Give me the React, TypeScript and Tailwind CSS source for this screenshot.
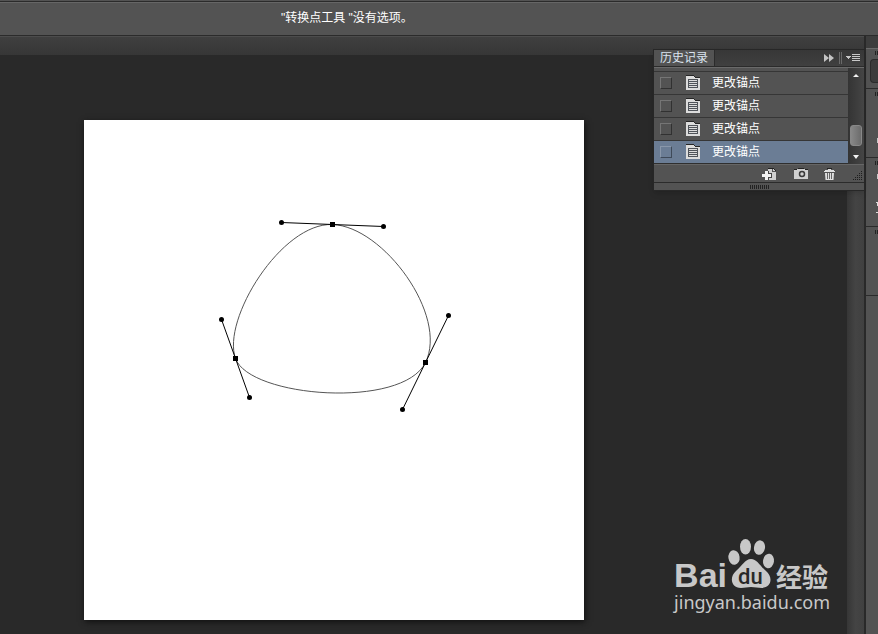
import { useState } from 'react'

const historyStates = [
  { id: 1, name: '更改锚点' },
  { id: 2, name: '更改锚点' },
  { id: 3, name: '更改锚点' },
  { id: 4, name: '更改锚点' },
]

// Anchor points of the path, each with its two direction handles
const anchors = [
  { x: 248, y: 104, a: [197, 102], b: [299, 106] },
  { x: 341, y: 242, a: [364, 195], b: [318, 289] },
  { x: 151, y: 238, a: [165, 277], b: [137, 199] },
]

function StateIcon() {
  return (
    <svg width="14" height="16" viewBox="0 0 14 16" shapeRendering="crispEdges" aria-hidden="true">
      <path d="M0 0h8v1h1v1h5v1H0z" fill="#262626" />
      <path d="M0 1h8v1h1v1h5v12H0z" fill="#dcdcdc" />
      <path d="M2 4h10v9H2z" fill="#50545a" />
      <path d="M3 5h8v1H3zM3 7h8v1H3zM3 9h8v1H3zM3 11h8v1H3z" fill="#dcdcdc" />
    </svg>
  )
}

function NewDocumentIcon() {
  return (
    <svg width="15" height="12" viewBox="0 0 15 12" shapeRendering="crispEdges" aria-hidden="true">
      <path d="M6 0h6v1H6zM12 1h1v1h-1zM13 2h1v1h-1z" fill="#222" />
      <path d="M6 1h4v3h4v8H6z" fill="#d0d0d0" />
      <path d="M11 1h1v1h1v1h-2z" fill="#d0d0d0" />
      <path d="M3 3h4v2h3v5H7v2H3z" fill="#444" />
      <path d="M3 3h3v3h3v3H6v3H3V9H0V6h3z" fill="#f2f2f2" />
    </svg>
  )
}

function CameraIcon() {
  return (
    <svg width="14" height="11" viewBox="0 0 14 11" aria-hidden="true">
      <path d="M0 1h4V0h6v1h4v10H0z" fill="#d0d0d0" />
      <path d="M4 0h6v1H4zM0 1h3v1H0zM11 1h3v1h-3z" fill="#222" />
      <circle cx="8" cy="6" r="2.500" fill="#d0d0d0" stroke="#3a3a3a" strokeWidth="1.500" />
    </svg>
  )
}

function TrashIcon() {
  return (
    <svg width="11" height="12" viewBox="0 0 11 12" aria-hidden="true">
      <path d="M3 0h5v1H3z" fill="#222" />
      <path d="M4 1h3v1h3v1h1v1H0V3h1V2h3z" fill="#e0e0e0" />
      <path d="M1 5h9l-.5 7h-8z" fill="#e0e0e0" />
      <path d="M3 5h1v6H3zM5 5h1v6H5zM7 5h1v6H7z" fill="#666" />
    </svg>
  )
}

function ResizeGrip() {
  return (
    <svg width="10" height="10" viewBox="0 0 10 10" shapeRendering="crispEdges" aria-hidden="true">
      <path
        d="M8 0h1v1H8zM6 2h1v1H6zM8 2h1v1H8zM4 4h1v1H4zM6 4h1v1H6zM8 4h1v1H8zM2 6h1v1H2zM4 6h1v1H4zM6 6h1v1H6zM8 6h1v1H8zM0 8h1v1H0zM2 8h1v1H2zM4 8h1v1H4zM6 8h1v1H6zM8 8h1v1H8z"
        fill="#1e1e1e"
      />
    </svg>
  )
}

function HistoryPanel() {
  const [current, setCurrent] = useState(4)
  const [source, setSource] = useState(0)

  return (
    <section
      aria-label="历史记录"
      className="absolute top-[49px] right-[13px] w-[212px] border border-[#272727] bg-[#535353] shadow-md"
    >
      {/* Tab bar */}
      <div className="flex h-[17px] items-stretch border-b border-[#2b2b2b] bg-linear-to-b from-[#373737] to-[#404040]">
        <button className="w-[61px] border-r border-[#2b2b2b] bg-[#535353] text-center text-[12px] leading-[16px] text-[#dbe4ef]">
          历史记录
        </button>
        <div className="flex flex-1 items-center justify-end gap-1 pr-1">
          <button aria-label="折叠" className="mr-px">
            <svg width="10" height="8" viewBox="0 0 10 8">
              <path d="M0 0l5 4-5 4zM5 0l5 4-5 4z" fill="#c4c4c4" />
            </svg>
          </button>
          <span className="h-3 w-[3px] border-x border-[#6a6a6a]" />
          <button aria-label="面板菜单">
            <svg width="14" height="8" viewBox="0 0 14 8" shapeRendering="crispEdges">
              <path d="M0 2h5v1H4v1H3v1H2V4H1V3H0zM6 0h8v1H6zM6 2h8v1H6zM6 4h8v1H6zM6 6h8v1H6z" fill="#c8c8c8" />
            </svg>
          </button>
        </div>
      </div>

      {/* State list */}
      <div className="flex border-t border-[#6a6a6a]">
        <ul className="flex-1 border-b border-[#2f2f2f] pt-[3px]">
          {historyStates.map((state) => (
            <li
              key={state.id}
              className={`flex h-[23px] items-center border-t border-[#363636] pl-[6px] ${
                state.id === current ? 'bg-[#6b7d95]' : 'bg-[#535353]'
              }`}
            >
              <input
                type="checkbox"
                aria-label={`历史记录画笔的源 ${state.id}`}
                checked={source === state.id}
                onChange={() => setSource(source === state.id ? 0 : state.id)}
                className="size-3 appearance-none border border-t-white/20 border-r-black/40 border-b-black/40 border-l-white/20 checked:bg-white/30"
              />
              <button
                onClick={() => setCurrent(state.id)}
                className="flex flex-1 items-center gap-3 pl-[14px] text-[12px] leading-[22px] text-white"
              >
                <StateIcon />
                {state.name}
              </button>
            </li>
          ))}
        </ul>
        <div className="flex w-4 flex-col items-center bg-linear-to-r from-[#343434] to-[#454545] pt-[6px] pb-[5px]">
          <svg width="6" height="4" viewBox="0 0 6 4">
            <path d="M3 0l3 3H0z" fill="#f2f2f2" />
          </svg>
          <div className="mt-auto mb-[9px] h-[21px] w-3 rounded-[3px] border border-[#888] bg-linear-to-r from-[#888] to-[#6c6c6c]" />
          <svg width="6" height="4" viewBox="0 0 6 4">
            <path d="M0 0h6L3 4z" fill="#f2f2f2" />
          </svg>
        </div>
      </div>

      {/* Actions */}
      <div className="flex h-[18px] items-center justify-end border-t border-[#666]">
        <button aria-label="从当前状态创建新文档" className="mr-[17px]">
          <NewDocumentIcon />
        </button>
        <button aria-label="创建新快照" className="mr-4">
          <CameraIcon />
        </button>
        <button aria-label="删除当前状态" className="mr-[18px]">
          <TrashIcon />
        </button>
        <span className="mt-[5px] mr-px">
          <ResizeGrip />
        </span>
      </div>
      <div className="flex h-2 items-center justify-center border-t border-[#2b2b2b]">
        <svg width="19" height="4" viewBox="0 0 19 4" shapeRendering="crispEdges" aria-hidden="true">
          <path d="M0 2h19" stroke="#222" strokeWidth="4" strokeDasharray="1 1" />
        </svg>
      </div>
    </section>
  )
}

function PathDrawing() {
  return (
    <svg width="500" height="500" viewBox="-0.5 -0.5 500 500" aria-label="路径">
      <path
        d="M151 238C137 199 197 102 248 104C299 106 364 195 341 242C318 289 165 277 151 238Z"
        fill="none"
        stroke="#555"
        strokeWidth="1"
      />
      {anchors.map((p) => (
        <g key={p.x}>
          <path d={`M${p.a[0]} ${p.a[1]}L${p.x} ${p.y}L${p.b[0]} ${p.b[1]}`} fill="none" stroke="#000" />
          <circle cx={p.a[0]} cy={p.a[1]} r="2.5" />
          <circle cx={p.b[0]} cy={p.b[1]} r="2.5" />
          <rect x={p.x - 2.5} y={p.y - 2.5} width="5" height="5" />
        </g>
      ))}
    </svg>
  )
}

function DockGrip() {
  return (
    <svg width="3" height="4" viewBox="0 0 3 4" shapeRendering="crispEdges" className="ml-auto" aria-hidden="true">
      <path d="M0 0h1v4H0zM2 0h1v4H2z" fill="#222" />
    </svg>
  )
}

// Collapsed tool dock, cut off by the window edge
function Dock() {
  return (
    <aside className="flex w-[14px] shrink-0 flex-col border-l-2 border-[#292929] bg-[#535353]">
      <div className="h-3 bg-[#3d3d3d]" />
      <div className="h-10 border-t border-[#6a6a6a] pt-[2px]">
        <DockGrip />
        <div className="mt-1 ml-1 h-6 rounded-l-sm border border-r-0 border-[#2b2b2b] bg-[#3c3c3c]" />
      </div>
      <div className="h-[69px] border-t border-[#2b2b2b] pt-[3px]">
        <DockGrip />
        <div className="mt-[42px] ml-auto h-[5px] w-px bg-[#c8c8c8]" />
      </div>
      <div className="h-[69px] border-t border-[#2b2b2b] pt-[3px]">
        <DockGrip />
        <div className="mt-[9px] ml-auto h-[5px] w-px bg-[#c8c8c8]" />
        <svg width="2" height="13" viewBox="0 0 2 13" className="mt-[22px] ml-auto" aria-hidden="true">
          <path d="M0 1h2v1H0zM1 2h1v3H1zM0 11h2v1H0z" fill="#dcdcdc" />
        </svg>
      </div>
      <div className="h-[69px] border-t border-[#2b2b2b] pt-[3px]">
        <DockGrip />
      </div>
      <div className="flex-1 border-t border-[#2b2b2b]" />
    </aside>
  )
}

function Watermark() {
  return (
    <div className="absolute right-[48px] bottom-[22px] text-[#c8c8c8]">
      <div className="flex items-baseline font-bold">
        <span className="text-[34px] leading-[28px]">Bai</span>
        <svg width="48" height="48" viewBox="0 0 48 48" className="ml-px shrink-0 overflow-visible" aria-label="du">
          <g fill="#c8c8c8">
            <ellipse cx="6" cy="18.500" rx="5.600" ry="7.300" transform="rotate(-8 6 18.5)" />
            <ellipse cx="17.500" cy="7.800" rx="5.500" ry="7.700" />
            <ellipse cx="31.500" cy="8.600" rx="5.500" ry="7.300" transform="rotate(10 31.5 8.6)" />
            <ellipse cx="40.500" cy="22" rx="5.500" ry="7.300" transform="rotate(8 40.5 22)" />
            <path d="M23 20C17 20 14 27 8 32C1 38 3 49 13 49C17 49 19 48 23 48C27 48 30 49 34 49C44 48 45 38 38 32C32 27 29 20 23 20Z" />
          </g>
          <text x="10" y="45" fontFamily="Roboto, sans-serif" fontWeight="500" fontSize="22" fill="#292929">
            du
          </text>
        </svg>
        <span className="text-[26px] leading-[28px]">经验</span>
      </div>
      <p className="font-['Noto_Sans',sans-serif] text-[18px] leading-5">jingyan.baidu.com</p>
    </div>
  )
}

export default function App() {
  return (
    <div className="relative flex min-h-screen flex-col overflow-hidden bg-[#292929] font-['Liberation_Sans','Noto_Sans_CJK_SC',sans-serif]">
      {/* Options bar */}
      <header className="border-b border-[#2b2b2b] bg-[#535353] pt-px">
        <div className="h-[34px] border-t border-[#2b2b2b]">
          <p className="border-t border-[#666] pl-[281px] text-[12px] leading-[30px] text-white">
            "转换点工具 "没有选项。
          </p>
        </div>
      </header>

      <div className="flex flex-1">
        <div className="flex min-w-0 flex-1 flex-col">
          {/* Document tab strip */}
          <div className="h-[19px] border-t border-[#4c4c4c] bg-linear-to-b from-[#3f3f3f] to-[#363636]" />
          <div className="flex flex-1">
            <main className="min-w-0 flex-1 pt-[65px] pb-[14px] pl-[84px]">
              <div className="w-[500px] bg-white shadow-[1px_2px_6px_#111]">
                <PathDrawing />
              </div>
            </main>
            <div className="w-[17px] shrink-0 bg-linear-to-r from-[#363636] via-[#444] to-[#404040]" />
          </div>
        </div>
        <Dock />
      </div>

      <HistoryPanel />
      <Watermark />
    </div>
  )
}
